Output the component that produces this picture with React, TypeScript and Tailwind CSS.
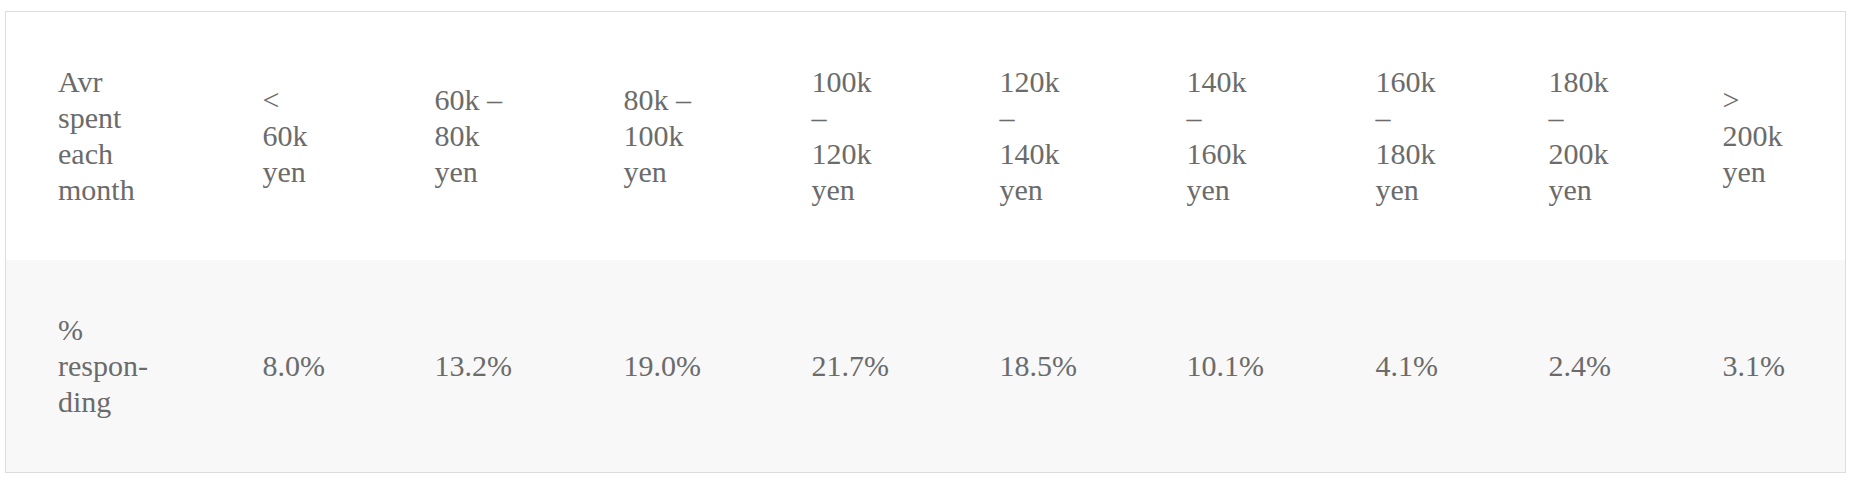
const header: string[][] = [
  ["Avr", "spent", "each", "month"],
  ["<", "60k", "yen"],
  ["60k –", "80k", "yen"],
  ["80k –", "100k", "yen"],
  ["100k", "–", "120k", "yen"],
  ["120k", "–", "140k", "yen"],
  ["140k", "–", "160k", "yen"],
  ["160k", "–", "180k", "yen"],
  ["180k", "–", "200k", "yen"],
  [">", "200k", "yen"],
];

const values = ["8.0%", "13.2%", "19.0%", "21.7%", "18.5%", "10.1%", "4.1%", "2.4%", "3.1%"];

const widths = [
  "w-[205px]",
  "w-[172px]",
  "w-[189px]",
  "w-[188px]",
  "w-[188px]",
  "w-[187px]",
  "w-[189px]",
  "w-[173px]",
  "w-[174px]",
  "w-[175px]",
];

function Lines({ lines }: { lines: string[] }) {
  return (
    <>
      {lines.map((l, i) => (
        <span key={i} className="block whitespace-nowrap">
          {l}
        </span>
      ))}
    </>
  );
}

export default function App() {
  return (
    <div className="min-h-[480px] bg-white pl-[5px] pt-[11px]">
      <table
        className="table-fixed border-collapse border border-[#dddddd] w-[1840px] text-[30px] leading-[36px] text-[#6b6b6b]"
        style={{ fontFamily: '"Liberation Serif", "DejaVu Serif", serif' }}
      >
        <colgroup>
          {widths.map((w, i) => (
            <col key={i} className={w} />
          ))}
        </colgroup>
        <thead>
          <tr className="bg-white">
            {header.map((lines, i) => (
              <th key={i} className="p-[52px] pr-0 text-left font-normal align-middle">
                <Lines lines={lines} />
              </th>
            ))}
          </tr>
        </thead>
        <tbody>
          <tr className="bg-[#f8f8f8]">
            <td className="p-[52px] pr-0 align-middle">
              <Lines lines={["%", "respon-", "ding"]} />
            </td>
            {values.map((v, i) => (
              <td key={i} className="p-[52px] pr-0 align-middle whitespace-nowrap">
                {v}
              </td>
            ))}
          </tr>
        </tbody>
      </table>
    </div>
  );
}
